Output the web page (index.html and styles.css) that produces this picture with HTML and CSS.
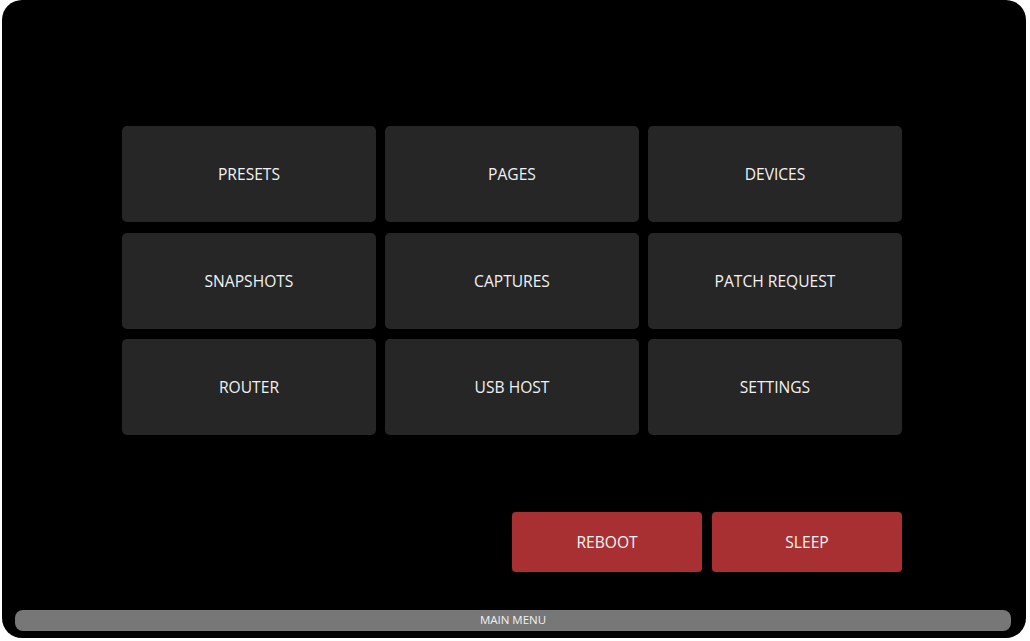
FILE: index.html
```html
<!DOCTYPE html>
<html>
<head>
<meta charset="utf-8">
<link rel="stylesheet" href="styles.css">
</head>
<body>
<div class="screen">
  <div class="grid">
    <div class="tile">PRESETS</div>
    <div class="tile">PAGES</div>
    <div class="tile">DEVICES</div>
    <div class="tile">SNAPSHOTS</div>
    <div class="tile">CAPTURES</div>
    <div class="tile">PATCH REQUEST</div>
    <div class="tile">ROUTER</div>
    <div class="tile">USB HOST</div>
    <div class="tile">SETTINGS</div>
  </div>
  <div class="actions">
    <div class="btn-red">REBOOT</div>
    <div class="btn-red">SLEEP</div>
  </div>
  <div class="bar">MAIN MENU</div>
</div>
</body>
</html>
```
FILE: styles.css
```css
html, body {
  margin: 0;
  padding: 0;
  background: #ffffff;
  width: 1030px;
  height: 641px;
  overflow: hidden;
}
body {
  font-family: "Open Sans", "DejaVu Sans", sans-serif;
}
.screen {
  margin-left: 2px;
  width: 1024px;
  height: 638px;
  background: #000000;
  border-radius: 20px;
  display: flex;
  flex-direction: column;
  padding-top: 126px;
  box-sizing: border-box;
}
.grid {
  margin-left: 120px;
  width: 780px;
  display: grid;
  grid-template-columns: 254px 254px 254px;
  grid-auto-rows: 96px;
  column-gap: 9px;
  row-gap: 10.5px;
}
.tile {
  background: #262626;
  border-radius: 5px;
  color: #f2f2f2;
  font-size: 15.6px;
  padding-bottom: 0;
  box-sizing: border-box;
  display: flex;
  align-items: center;
  justify-content: center;
}
.actions {
  margin-left: 120px;
  width: 780px;
  margin-top: 77px;
  display: flex;
  justify-content: flex-end;
  gap: 10px;
}
.btn-red {
  width: 190px;
  height: 60px;
  background: #a83033;
  border-radius: 4px;
  color: #f4f4f4;
  font-size: 15.6px;
  padding-bottom: 0;
  box-sizing: border-box;
  display: flex;
  align-items: center;
  justify-content: center;
}
.bar {
  margin-top: 38px;
  margin-left: 13px;
  width: 996px;
  height: 21px;
  background: #777777;
  border-radius: 8px;
  color: #f2f2f2;
  font-size: 11.5px;
  padding-bottom: 2px;
  box-sizing: border-box;
  display: flex;
  align-items: center;
  justify-content: center;
}
```
